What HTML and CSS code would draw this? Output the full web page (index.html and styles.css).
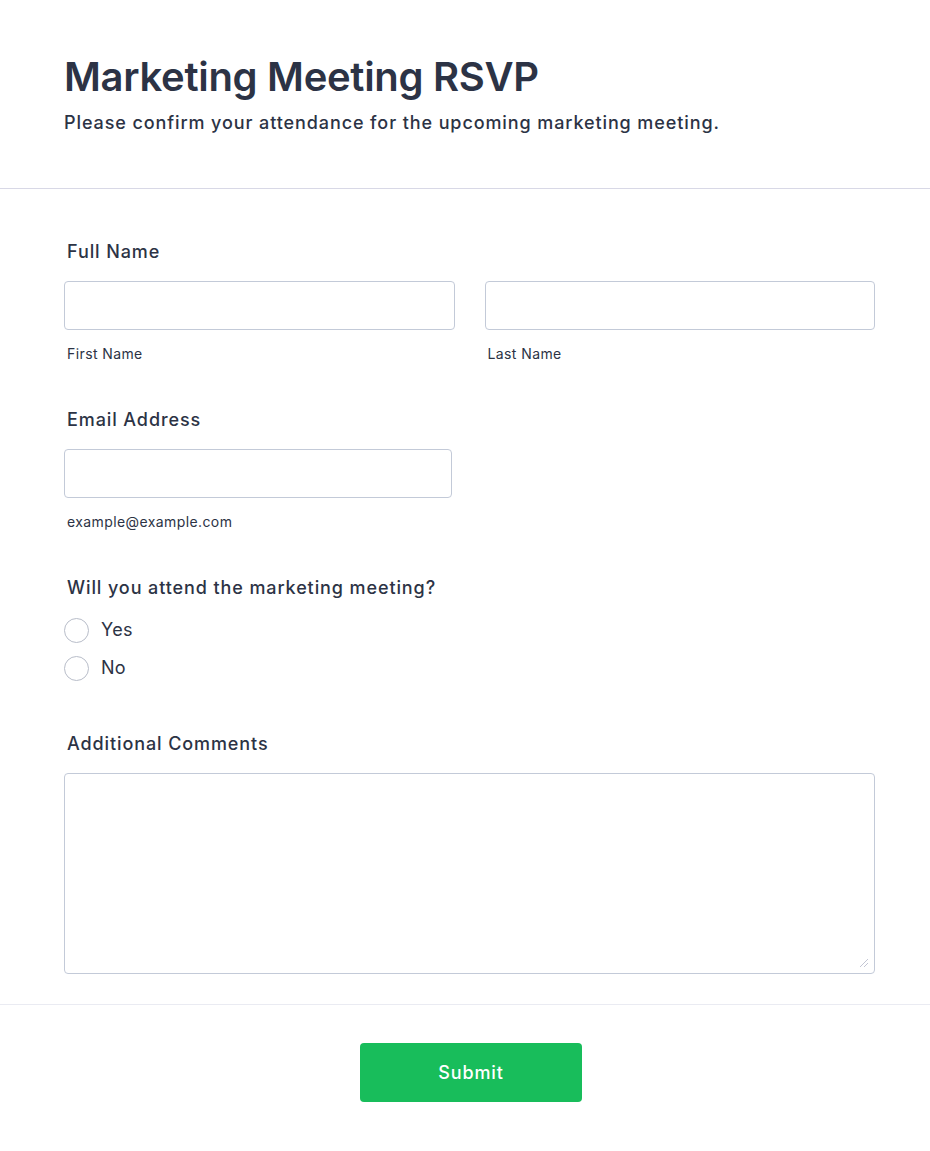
FILE: index.html
```html
<!DOCTYPE html>
<html lang="en">
<head>
<meta charset="utf-8">
<title>Marketing Meeting RSVP</title>
<link rel="stylesheet" href="styles.css">
</head>
<body>
<div class="page">
  <header class="header">
    <h1 class="title">Marketing Meeting RSVP</h1>
    <p class="subtitle">Please confirm your attendance for the upcoming marketing meeting.</p>
  </header>
  <form class="form">
    <div class="field with-sub">
      <label class="label">Full Name</label>
      <div class="name-row">
        <div class="sub-field">
          <input class="input" type="text">
          <span class="sublabel">First Name</span>
        </div>
        <div class="sub-field">
          <input class="input" type="text">
          <span class="sublabel">Last Name</span>
        </div>
      </div>
    </div>
    <div class="field with-sub">
      <label class="label">Email Address</label>
      <div class="sub-field email">
        <input class="input" type="email">
        <span class="sublabel">example@example.com</span>
      </div>
    </div>
    <div class="field">
      <label class="label">Will you attend the marketing meeting?</label>
      <div class="radios">
        <label class="radio-row"><span class="radio"></span><span class="radio-text">Yes</span></label>
        <label class="radio-row"><span class="radio"></span><span class="radio-text">No</span></label>
      </div>
    </div>
    <div class="field last">
      <label class="label">Additional Comments</label>
      <div class="textarea-wrap">
        <textarea class="textarea"></textarea>
        <svg class="grip" width="10" height="10" viewBox="0 0 10 10" aria-hidden="true">
          <line x1="1" y1="9" x2="9" y2="1" stroke="#c3c6d4" stroke-width="1"/>
          <line x1="5" y1="9" x2="9" y2="5" stroke="#c3c6d4" stroke-width="1"/>
        </svg>
      </div>
    </div>
  </form>
  <footer class="footer">
    <button class="submit" type="button">Submit</button>
  </footer>
</div>
</body>
</html>
```
FILE: styles.css
```css
* { box-sizing: border-box; }
html, body { margin: 0; padding: 0; background: #ffffff; }
body {
  font-family: Inter, "Noto Sans", sans-serif;
  color: #2c3345;
}
.header {
  padding: 53px 64px 53px;
  border-bottom: 1px solid #d8d8e6;
}
.title {
  margin: 0;
  font-size: 40px;
  line-height: 48px;
  font-weight: 600;
  letter-spacing: -0.3px;
}
.subtitle {
  margin: 10px 0 0;
  font-size: 18px;
  line-height: 24px;
  font-weight: 500;
  letter-spacing: 0.9px;
}
.form {
  padding: 50px 55px 30px 64px;
}
.field {
  display: flex;
  flex-direction: column;
  margin-bottom: 44px;
}
.field.with-sub { margin-bottom: 43px; }
.field.last { margin-bottom: 0; }
.label {
  font-size: 18px;
  line-height: 24px;
  font-weight: 500;
  letter-spacing: 0.9px;
  padding-left: 3px;
  padding-top: 1px;
  margin-bottom: 17px;
}
.name-row {
  display: grid;
  grid-template-columns: 1fr 1fr;
  column-gap: 30px;
}
.sub-field {
  display: flex;
  flex-direction: column;
}
.sub-field.email { width: 388px; }
.input {
  height: 49px;
  width: 100%;
  border: 1px solid #c3cad8;
  border-radius: 4px;
  background: #fff;
  font: inherit;
  margin: 0;
}
.sublabel {
  margin-top: 14px;
  padding-left: 3px;
  font-size: 14px;
  line-height: 20px;
  letter-spacing: 0.4px;
  color: #2c3345;
}
.radios {
  display: flex;
  flex-direction: column;
  margin-top: -6px;
}
.radio-row {
  display: flex;
  align-items: center;
  height: 38px;
  gap: 12px;
}
.radio {
  width: 25px;
  height: 25px;
  border: 1px solid #b8bdc9;
  border-radius: 50%;
  background: #fff;
  flex-shrink: 0;
}
.radio-text {
  font-size: 18px;
  line-height: 24px;
  letter-spacing: 0.3px;
}
.textarea-wrap {
  position: relative;
  width: 811px;
  height: 201px;
}
.textarea {
  display: block;
  width: 811px;
  height: 201px;
  border: 1px solid #c3cad8;
  border-radius: 4px;
  margin: 0;
  font: inherit;
  resize: none;
}
.grip {
  position: absolute;
  right: 6px;
  bottom: 6px;
}
.footer {
  border-top: 1px solid #eaebf2;
  padding: 38px 0 50px;
  display: flex;
  justify-content: center;
}
.submit {
  width: 222px;
  height: 59px;
  background: #18bd5b;
  color: #ffffff;
  border: none;
  border-radius: 4px;
  font-family: Inter, "Noto Sans", sans-serif;
  font-size: 18px;
  font-weight: 500;
  letter-spacing: 0.9px;
  margin-left: 12px;
}
```
